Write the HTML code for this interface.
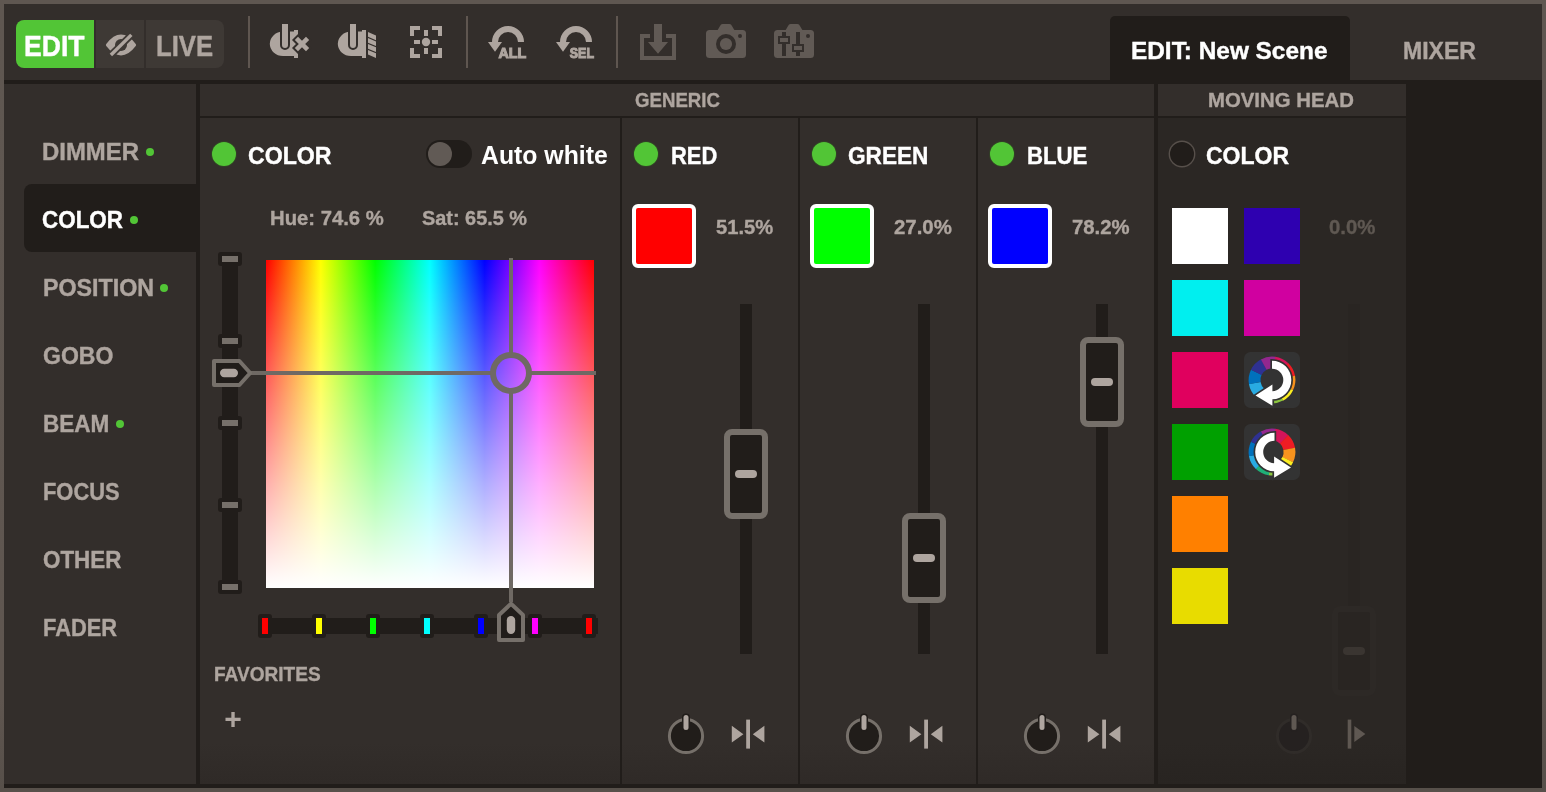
<!DOCTYPE html>
<html lang="en">
<head>
<meta charset="utf-8">
<title>Scene Editor</title>
<style>
*{box-sizing:border-box;margin:0;padding:0}
html,body{width:1546px;height:792px;overflow:hidden;background:#5f5650}
body{background:linear-gradient(#5f5751 0,#5f5650 700px,#57504a 788px)}
body{font-family:"Liberation Sans",sans-serif;font-weight:bold;position:relative;color:#aea59f}
.abs,.abs *{position:absolute}
#app{left:4px;top:4px;width:1538px;height:784px;background:#211d1a;overflow:hidden}
/* everything inside #app uses page coords shifted by -4 via wrapper */
#pg{left:-4px;top:-4px;width:1546px;height:792px;will-change:transform}
.bg{background:#332e2b}
.dk{background:#211d1a}
.t{white-space:nowrap;line-height:1;transform-origin:0 50%;-webkit-text-stroke:.4px}
.f24{font-size:24.5px}
.f20{font-size:20.2px;-webkit-text-stroke:.35px}
.w{color:#fff}
.g{color:#aea59f}
.sep{width:2px;top:16px;height:52px;background:#5f5650}
.dot{width:8px;height:8px;border-radius:50%;background:#52c536}
.led{width:24px;height:24px;border-radius:50%;background:#52c536;box-shadow:0 0 0 1px rgba(50,80,35,.55)}
.panel{background:linear-gradient(#332e2b 0,#332e2b 625px,#2f2a27 666px)}
.track{width:12px;background:#211d1a}
.hdl{width:44px;height:90px;border:6px solid #76706a;border-radius:8px;background:#211d1a}
.hdl i{left:5px;top:35px;width:22px;height:8px;border-radius:4px;background:#aea59f}
.sw{width:64px;height:64px;border:4px solid #fff;border-radius:6px}
.cs{width:56px;height:56px}
.tick{width:24px;height:14px;border-radius:3px;background:#211d1a;left:218px}
.tick i{left:4px;top:4px;width:16px;height:6px;background:#76706a}
.ht{width:14px;height:24px;border-radius:3px;background:#211d1a;top:614px}
.ht i{left:4px;top:4px;width:6px;height:16px}
</style>
</head>
<body>
<div id="app" class="abs"><div id="pg">

<!-- ======= TOOLBAR ======= -->
<div class="bg" style="left:4px;top:4px;width:1538px;height:76px"></div>
<div id="btn-edit" style="left:16px;top:20px;width:78px;height:48px;background:#52c536;border-radius:8px 0 0 8px"></div>
<div class="t w" id="tx-edit" style="left:24.4px;top:30.6px;font-size:29.4px;transform:scaleX(0.904)">EDIT</div>
<div id="btn-eye" style="left:96px;top:20px;width:48px;height:48px;background:#3e3935"></div>
<div id="btn-live" style="left:146px;top:20px;width:78px;height:48px;background:#3e3935;border-radius:0 8px 8px 0"></div>
<div class="t g" id="tx-live" style="left:156.4px;top:30.6px;font-size:29.4px;transform:scaleX(0.874)">LIVE</div>
<div class="sep" style="left:248px"></div>
<div class="sep" style="left:466px"></div>
<div class="sep" style="left:616px"></div>
<svg id="tb-icons" style="left:0;top:0" width="1546" height="84" viewBox="0 0 1546 84">
<!-- eye off -->
<g>
<path d="M107.6,45 Q121,27.5 134.4,45 Q121,62.5 107.6,45Z" fill="#aea59f" stroke="#aea59f" stroke-width="3.4" stroke-linejoin="round"/>
<circle cx="121" cy="45" r="6" fill="#3e3935"/>
<line x1="109.4" y1="56.5" x2="132.8" y2="33.4" stroke="#3e3935" stroke-width="7"/>
<line x1="110.9" y1="55" x2="131.3" y2="34.9" stroke="#aea59f" stroke-width="3.4"/>
</g>
<!-- lamp + X (clear selection) -->
<g fill="#aea59f">
<path d="M294,31.6 H283 A13.2,12.25 0 0 0 283,56.1 H294 Z"/>
<rect x="294" y="30" width="4" height="28"/>
<path d="M282,24 H288 V45 A3,3 0 0 1 282,45 Z" stroke="#332e2b" stroke-width="4" paint-order="stroke"/>
<path d="M282,24 H288 V31 H282 Z"/>
<g transform="translate(302 44) rotate(45)">
<path d="M-7.9,-2.25 H-2.25 V-7.9 H2.25 V-2.25 H7.9 V2.25 H2.25 V7.9 H-2.25 V2.25 H-7.9 Z" stroke="#332e2b" stroke-width="4" paint-order="stroke"/>
</g>
</g>
<!-- lamp + rays (select all) -->
<g fill="#aea59f">
<path d="M362,31.6 H351 A13.2,12.25 0 0 0 351,56.1 H362 Z"/>
<rect x="362" y="30" width="4" height="28"/>
<path d="M350,24 H356 V45 A3,3 0 0 1 350,45 Z" stroke="#332e2b" stroke-width="4" paint-order="stroke"/>
<path d="M350,24 H356 V31 H350 Z"/>
<path d="M368,32 L376,35.6 V40.2 L368,36.8Z M368,38 L376,41.4 V46 L368,42.8Z M368,44 L376,47.3 V52 L368,48.8Z M368,50 L376,53.3 V58 L368,54.6Z"/>
</g>
<!-- focus frame -->
<g fill="#aea59f">
<path d="M410,26 H420 V30 H414 V36 H410Z M442,26 H432 V30 H438 V36 H442Z M410,58 H420 V54 H414 V48 H410Z M442,58 H432 V54 H438 V48 H442Z"/>
<circle cx="426" cy="42" r="4.2"/>
<rect x="424" y="30" width="4" height="6"/><rect x="424" y="48" width="4" height="6"/>
<rect x="414" y="40" width="6" height="4"/><rect x="432" y="40" width="6" height="4"/>
</g>
<!-- reset ALL -->
<g fill="#aea59f">
<path d="M495,42 A13,13 0 0 1 521,42" fill="none" stroke="#aea59f" stroke-width="6"/>
<path d="M488,42 H502 L495,51.7Z"/>
<text x="498.4" y="57.9" font-family="'Liberation Sans',sans-serif" font-weight="bold" font-size="15.2" textLength="27.8" lengthAdjust="spacingAndGlyphs" stroke="#aea59f" stroke-width="1.1">ALL</text>
</g>
<!-- reset SEL -->
<g fill="#aea59f">
<path d="M563,42 A13,13 0 0 1 589,42" fill="none" stroke="#aea59f" stroke-width="6"/>
<path d="M556,42 H570 L563,51.7Z"/>
<text x="569.8" y="57.9" font-family="'Liberation Sans',sans-serif" font-weight="bold" font-size="15.2" textLength="24.2" lengthAdjust="spacingAndGlyphs" stroke="#aea59f" stroke-width="1.1">SEL</text>
</g>
<!-- save/download (disabled) -->
<g fill="#615a55">
<path d="M640,34 H650 V38 H644 V56 H672 V38 H666 V34 H676 V60 H640Z"/>
<path d="M654,24 H662 V42 H668 L658,53.8 L648,42 H654Z"/>
</g>
<!-- camera (disabled) -->
<g fill="#615a55">
<rect x="706" y="30" width="40" height="28" rx="3.5"/>
<path d="M717,31 L721,24.6 Q721.6,24 722.5,24 H729.5 Q730.4,24 731,24.6 L735,31Z"/>
<circle cx="726" cy="44" r="10" fill="#332e2b"/><circle cx="726" cy="44" r="6.1"/>
<circle cx="740" cy="36" r="2" fill="#332e2b"/>
</g>
<!-- camera + faders (disabled) -->
<g fill="#615a55">
<rect x="774" y="30" width="40" height="28" rx="3.5"/>
<path d="M785,31 L789,24.6 Q789.6,24 790.5,24 H797.5 Q798.4,24 799,24.6 L803,31Z"/>
<circle cx="808" cy="36" r="2" fill="#332e2b"/>
<rect x="782" y="32" width="4" height="24" fill="#332e2b"/><rect x="778" y="36" width="12" height="8" fill="#332e2b"/><rect x="780" y="38" width="8" height="4"/>
<rect x="796" y="32" width="4" height="24" fill="#332e2b"/><rect x="792" y="44" width="12" height="8" fill="#332e2b"/><rect x="794" y="46" width="8" height="4"/>
</g>
</svg>

<!-- tabs -->
<div class="dk" style="left:1110px;top:16px;width:240px;height:68px;border-radius:5px 5px 0 0"></div>
<div class="t w f24" id="tx-tab" style="left:1131.4px;top:38.8px;transform:scaleX(0.995)">EDIT: New Scene</div>
<div class="t g f24" id="tx-mixer" style="left:1403.1px;top:38.8px;transform:scaleX(0.940)">MIXER</div>

<!-- ======= SIDEBAR ======= -->
<div class="bg" style="left:4px;top:84px;width:192px;height:700px"></div>
<div class="dk" style="left:24px;top:184px;width:172px;height:68px;border-radius:8px 0 0 8px"></div>
<div class="t g f24" id="sb1" style="left:42.4px;top:139.9px;transform:scaleX(0.976)">DIMMER</div><div class="dot" style="left:146px;top:148px"></div>
<div class="t w f24" id="sb2" style="left:42.3px;top:207.9px;transform:scaleX(0.915)">COLOR</div><div class="dot" style="left:130px;top:216px"></div>
<div class="t g f24" id="sb3" style="left:42.5px;top:275.9px;transform:scaleX(0.949)">POSITION</div><div class="dot" style="left:160px;top:284px"></div>
<div class="t g f24" id="sb4" style="left:42.6px;top:343.9px;transform:scaleX(0.939)">GOBO</div>
<div class="t g f24" id="sb5" style="left:42.5px;top:411.9px;transform:scaleX(0.919)">BEAM</div><div class="dot" style="left:116px;top:420px"></div>
<div class="t g f24" id="sb6" style="left:42.6px;top:479.9px;transform:scaleX(0.893)">FOCUS</div>
<div class="t g f24" id="sb7" style="left:42.7px;top:547.9px;transform:scaleX(0.913)">OTHER</div>
<div class="t g f24" id="sb8" style="left:42.6px;top:615.9px;transform:scaleX(0.891)">FADER</div>

<!-- ======= GENERIC GROUP ======= -->
<div class="bg" style="left:200px;top:84px;width:954px;height:32px"></div>
<div class="t g f20" id="tx-gen" style="left:634.5px;top:90.4px;transform:scaleX(0.923)">GENERIC</div>

<!-- COLOR panel -->
<div class="panel" id="p-color" style="left:200px;top:118px;width:420px;height:666px"></div>
<div class="led" style="left:212px;top:142px"></div>
<div class="t w f24" id="tx-color" style="left:248.2px;top:143.8px;transform:scaleX(0.944)">COLOR</div>
<div style="left:426px;top:140px;width:46px;height:28px;border-radius:14px;background:#211d1a"></div>
<div style="left:428px;top:142px;width:24px;height:24px;border-radius:50%;background:#615a55"></div>
<div class="t w f24" id="tx-auto" style="left:481.3px;top:143px;-webkit-text-stroke:0;font-size:25.4px;transform:scaleX(0.977)">Auto white</div>
<div class="t g f20" id="tx-hue" style="left:270.1px;top:208.0px;transform:scaleX(1.004)">Hue: 74.6 %</div>
<div class="t g f20" id="tx-sat" style="left:422.4px;top:208.0px;transform:scaleX(0.985)">Sat: 65.5 %</div>
<div id="sat-track" style="left:222px;top:254px;width:16px;height:338px;background:#211d1a"></div>
<div class="tick" style="top:252px"><i></i></div><div class="tick" style="top:334px"><i></i></div><div class="tick" style="top:416px"><i></i></div><div class="tick" style="top:498px"><i></i></div><div class="tick" style="top:580px"><i></i></div>
<div id="picker" style="left:266px;top:260px;width:328px;height:328px;background:linear-gradient(to bottom,rgba(255,255,255,0),#fff),linear-gradient(to right,#f00,#ff0,#0f0,#0ff,#00f,#f0f,#f00)"></div>
<div id="hue-track" style="left:260px;top:618px;width:338px;height:16px;background:#211d1a"></div>
<div class="ht" style="left:258px"><i style="background:#f00"></i></div><div class="ht" style="left:312px"><i style="background:#ff0"></i></div><div class="ht" style="left:366px"><i style="background:#0f0"></i></div><div class="ht" style="left:420px"><i style="background:#0ff"></i></div><div class="ht" style="left:474px"><i style="background:#00f"></i></div><div class="ht" style="left:528px"><i style="background:#f0f"></i></div><div class="ht" style="left:582px"><i style="background:#f00"></i></div>
<svg id="pk-svg" style="left:200px;top:240px" width="420" height="420" viewBox="200 240 420 420">
<g stroke="#6f6964" stroke-width="4" fill="none">
<path d="M251,373 H491 M531,373 H596 M511,258 V353 M511,393 V602"/>
<circle cx="511" cy="373" r="18" stroke-width="6"/>
</g>
<path d="M214,361 H239.4 L250.2,373 L239.4,385 H214 Z" fill="#211d1a" stroke="#76706a" stroke-width="4" stroke-linejoin="round"/>
<rect x="220" y="368.8" width="18" height="8.4" rx="4.2" fill="#aea59f"/>
<path d="M499,640 V615 L511,603.8 L523,615 V640 Z" fill="#211d1a" stroke="#76706a" stroke-width="4" stroke-linejoin="round"/>
<rect x="506.8" y="616" width="8.4" height="18" rx="4.2" fill="#aea59f"/>
</svg>
<div class="t g f20" id="tx-fav" style="left:214.1px;top:664.2px;transform:scaleX(0.944)">FAVORITES</div>
<div class="t g" id="tx-plus" style="left:224.3px;top:703.8px;font-size:30px;-webkit-text-stroke:0">+</div>

<!-- RED / GREEN / BLUE panels -->
<div class="panel" style="left:622px;top:118px;width:176px;height:666px"></div>
<div class="led" style="left:634px;top:142px"></div>
<div class="t w f24" id="tx-red" style="left:670.6px;top:143.8px;transform:scaleX(0.895)">RED</div>
<div class="sw" style="left:632px;top:204px;background:#ff0000"></div>
<div class="t g f20" id="tx-redp" style="left:716.1px;top:217.2px;transform:scaleX(0.999)">51.5%</div>
<div class="track" style="left:740px;top:304px;height:350px"></div>
<div class="hdl" style="left:724px;top:429px"><i></i></div>
<svg style="left:622px;top:700px" width="176" height="70" viewBox="0 700 176 70">
<circle cx="64" cy="736" r="16.6" fill="#211d1a" stroke="#76706a" stroke-width="3"/>
<rect x="61.5" y="715" width="5" height="15" rx="2.5" fill="#aea59f" stroke="#211d1a" stroke-width="3" paint-order="stroke"/>
<g fill="#aea59f"><rect x="124.2" y="719.6" width="3.8" height="29"/><path d="M109.8,725.8 V742.6 L121.4,734.2Z M142.4,725.8 V742.6 L130.8,734.2Z"/></g>
</svg>
<div class="panel" style="left:800px;top:118px;width:176px;height:666px"></div>
<div class="led" style="left:812px;top:142px"></div>
<div class="t w f24" id="tx-grn" style="left:847.7px;top:143.8px;transform:scaleX(0.922)">GREEN</div>
<div class="sw" style="left:810px;top:204px;background:#00ff00"></div>
<div class="t g f20" id="tx-grnp" style="left:893.5px;top:217.2px;transform:scaleX(1.011)">27.0%</div>
<div class="track" style="left:918px;top:304px;height:350px"></div>
<div class="hdl" style="left:902px;top:513px"><i></i></div>
<svg style="left:800px;top:700px" width="176" height="70" viewBox="0 700 176 70">
<circle cx="64" cy="736" r="16.6" fill="#211d1a" stroke="#76706a" stroke-width="3"/>
<rect x="61.5" y="715" width="5" height="15" rx="2.5" fill="#aea59f" stroke="#211d1a" stroke-width="3" paint-order="stroke"/>
<g fill="#aea59f"><rect x="124.2" y="719.6" width="3.8" height="29"/><path d="M109.8,725.8 V742.6 L121.4,734.2Z M142.4,725.8 V742.6 L130.8,734.2Z"/></g>
</svg>
<div class="panel" style="left:978px;top:118px;width:176px;height:666px"></div>
<div class="led" style="left:990px;top:142px"></div>
<div class="t w f24" id="tx-blu" style="left:1026.9px;top:143.8px;transform:scaleX(0.906)">BLUE</div>
<div class="sw" style="left:988px;top:204px;background:#0000ff"></div>
<div class="t g f20" id="tx-blup" style="left:1071.5px;top:217.2px;transform:scaleX(1.006)">78.2%</div>
<div class="track" style="left:1096px;top:304px;height:350px"></div>
<div class="hdl" style="left:1080px;top:337px"><i></i></div>
<svg style="left:978px;top:700px" width="176" height="70" viewBox="0 700 176 70">
<circle cx="64" cy="736" r="16.6" fill="#211d1a" stroke="#76706a" stroke-width="3"/>
<rect x="61.5" y="715" width="5" height="15" rx="2.5" fill="#aea59f" stroke="#211d1a" stroke-width="3" paint-order="stroke"/>
<g fill="#aea59f"><rect x="124.2" y="719.6" width="3.8" height="29"/><path d="M109.8,725.8 V742.6 L121.4,734.2Z M142.4,725.8 V742.6 L130.8,734.2Z"/></g>
</svg>


<!-- ======= MOVING HEAD GROUP ======= -->
<div class="bg" style="left:1158px;top:84px;width:248px;height:32px"></div>
<div class="t g f20" id="tx-mh" style="left:1208.0px;top:90.4px;transform:scaleX(1.008)">MOVING HEAD</div>
<div id="p-mh" style="left:1158px;top:118px;width:248px;height:666px;background:linear-gradient(#2b2724 0,#2b2724 625px,#282421 666px)"></div>
<div class="cs" style="left:1172px;top:208px;background:#ffffff"></div><div class="cs" style="left:1244px;top:208px;background:#2e00b0"></div><div class="cs" style="left:1172px;top:280px;background:#00efef"></div><div class="cs" style="left:1244px;top:280px;background:#d000a0"></div><div class="cs" style="left:1172px;top:352px;background:#e0005e"></div><div class="cs" style="left:1172px;top:424px;background:#00a000"></div><div class="cs" style="left:1172px;top:496px;background:#ff8000"></div><div class="cs" style="left:1172px;top:568px;background:#e8dc00"></div><div style="left:1170px;top:142px;width:24px;height:24px;border-radius:50%;background:#211d1a;box-shadow:0 0 0 1.4px #57504b"></div>
<div class="t w f24" id="tx-mhcolor" style="left:1205.8px;top:143.8px;transform:scaleX(0.938)">COLOR</div>
<div class="t f20" id="tx-mhp" style="left:1329.4px;top:217.2px;color:#5f5852;transform:scaleX(1.009)">0.0%</div>
<div style="left:1348px;top:304px;width:12px;height:350px;background:#292522"></div>
<div style="left:1332px;top:606px;width:44px;height:90px;border:6px solid #2d2926;border-radius:8px;background:#292522"><i style="left:5px;top:35px;width:22px;height:8px;border-radius:4px;background:#3a3531"></i></div>
<svg style="left:1158px;top:700px" width="248" height="70" viewBox="1158 700 248 70">
<circle cx="1294" cy="736" r="16.6" fill="#252120" stroke="#302c29" stroke-width="3"/>
<rect x="1291.5" y="715" width="5" height="15" rx="2.5" fill="#5f5852" stroke="#252120" stroke-width="3" paint-order="stroke"/>
<g fill="#5f5852"><rect x="1347.7" y="719.6" width="3.6" height="29"/><path d="M1354.3,726 V742 L1365.4,734Z"/></g>
</svg>
<svg id="wheels" style="left:1240px;top:348px" width="64" height="136" viewBox="1240 348 64 136"><g><rect x="1244" y="352" width="56" height="56" rx="6.5" fill="#333"/>
<g transform="translate(1272 380)"><path d="M3.14,-23.19 A23.4,23.4 0 0 1 16.34,-16.75 L8.10,-8.30 A11.6,11.6 0 0 0 1.55,-11.50Z" fill="#d4145a"/><path d="M16.17,-16.92 A23.4,23.4 0 0 1 23.07,-3.94 L11.43,-1.95 A11.6,11.6 0 0 0 8.01,-8.39Z" fill="#ed1c24"/><path d="M23.02,-4.18 A23.4,23.4 0 0 1 20.98,10.37 L10.40,5.14 A11.6,11.6 0 0 0 11.41,-2.07Z" fill="#f7931e"/><path d="M21.09,10.15 A23.4,23.4 0 0 1 10.88,20.72 L5.39,10.27 A11.6,11.6 0 0 0 10.45,5.03Z" fill="#fcee21"/><path d="M11.09,20.60 A23.4,23.4 0 0 1 -3.38,23.15 L-1.67,11.48 A11.6,11.6 0 0 0 5.50,10.21Z" fill="#8cc63f"/><path d="M-3.14,23.19 A23.4,23.4 0 0 1 -16.34,16.75 L-8.10,8.30 A11.6,11.6 0 0 0 -1.55,11.50Z" fill="#1fb078"/><path d="M-16.17,16.92 A23.4,23.4 0 0 1 -23.07,3.94 L-11.43,1.95 A11.6,11.6 0 0 0 -8.01,8.39Z" fill="#29abe2"/><path d="M-23.02,4.18 A23.4,23.4 0 0 1 -20.98,-10.37 L-10.40,-5.14 A11.6,11.6 0 0 0 -11.41,2.07Z" fill="#0071bc"/><path d="M-21.09,-10.15 A23.4,23.4 0 0 1 -10.88,-20.72 L-5.39,-10.27 A11.6,11.6 0 0 0 -10.45,-5.03Z" fill="#2e3192"/><path d="M-11.09,-20.60 A23.4,23.4 0 0 1 3.38,-23.15 L1.67,-11.48 A11.6,11.6 0 0 0 -5.50,-10.21Z" fill="#93278f"/></g>
<g transform="translate(1272 380)"><path d="M0,-19.3 A19.3,19.3 0 0 1 19.3,0 A19.3,19.3 0 0 1 0.4,19.3 L0.4,25.8 L-16.5,15.6 L0.4,4.5 L0.4,11.3 A11.3,11.3 0 0 0 11.3,0 A11.3,11.3 0 0 0 0,-11.3 Z" fill="#fff" stroke="#333" stroke-width="3.4" paint-order="stroke" stroke-linejoin="miter"/></g></g><g><rect x="1244" y="424" width="56" height="56" rx="6.5" fill="#333"/>
<g transform="translate(1272 452)"><path d="M3.14,-23.19 A23.4,23.4 0 0 1 16.34,-16.75 L8.10,-8.30 A11.6,11.6 0 0 0 1.55,-11.50Z" fill="#d4145a"/><path d="M16.17,-16.92 A23.4,23.4 0 0 1 23.07,-3.94 L11.43,-1.95 A11.6,11.6 0 0 0 8.01,-8.39Z" fill="#ed1c24"/><path d="M23.02,-4.18 A23.4,23.4 0 0 1 20.98,10.37 L10.40,5.14 A11.6,11.6 0 0 0 11.41,-2.07Z" fill="#f7931e"/><path d="M21.09,10.15 A23.4,23.4 0 0 1 10.88,20.72 L5.39,10.27 A11.6,11.6 0 0 0 10.45,5.03Z" fill="#fcee21"/><path d="M11.09,20.60 A23.4,23.4 0 0 1 -3.38,23.15 L-1.67,11.48 A11.6,11.6 0 0 0 5.50,10.21Z" fill="#8cc63f"/><path d="M-3.14,23.19 A23.4,23.4 0 0 1 -16.34,16.75 L-8.10,8.30 A11.6,11.6 0 0 0 -1.55,11.50Z" fill="#1fb078"/><path d="M-16.17,16.92 A23.4,23.4 0 0 1 -23.07,3.94 L-11.43,1.95 A11.6,11.6 0 0 0 -8.01,8.39Z" fill="#29abe2"/><path d="M-23.02,4.18 A23.4,23.4 0 0 1 -20.98,-10.37 L-10.40,-5.14 A11.6,11.6 0 0 0 -11.41,2.07Z" fill="#0071bc"/><path d="M-21.09,-10.15 A23.4,23.4 0 0 1 -10.88,-20.72 L-5.39,-10.27 A11.6,11.6 0 0 0 -10.45,-5.03Z" fill="#2e3192"/><path d="M-11.09,-20.60 A23.4,23.4 0 0 1 3.38,-23.15 L1.67,-11.48 A11.6,11.6 0 0 0 -5.50,-10.21Z" fill="#93278f"/></g>
<g transform="translate(1274.5 452) scale(-1 1)"><path d="M0,-19.3 A19.3,19.3 0 0 1 19.3,0 A19.3,19.3 0 0 1 0.4,19.3 L0.4,25.8 L-16.5,15.6 L0.4,4.5 L0.4,11.3 A11.3,11.3 0 0 0 11.3,0 A11.3,11.3 0 0 0 0,-11.3 Z" fill="#fff" stroke="#333" stroke-width="3.4" paint-order="stroke" stroke-linejoin="miter"/></g></g></svg>


</div></div>
</body>
</html>
